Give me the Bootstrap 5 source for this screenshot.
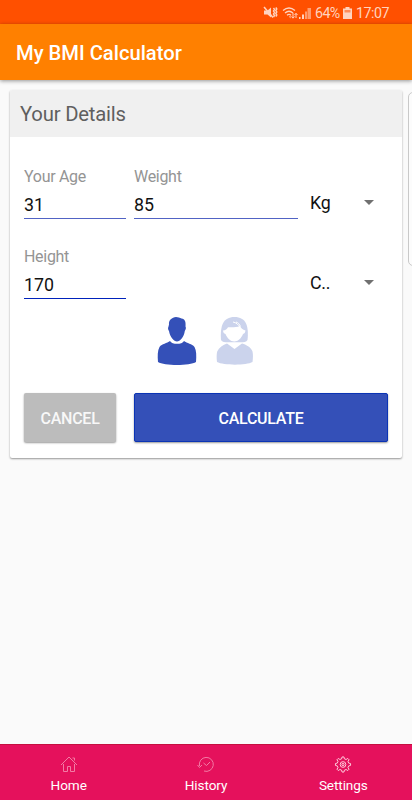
<!DOCTYPE html>
<html lang="en">
<head>
<meta charset="utf-8">
<meta name="viewport" content="width=device-width, initial-scale=1">
<title>My BMI Calculator</title>
<link href="https://cdn.jsdelivr.net/npm/bootstrap@5.3.0/dist/css/bootstrap.min.css" rel="stylesheet">
<style>
body{font-family:Roboto,sans-serif;background:#fafafa;height:800px;overflow:hidden;line-height:1}
svg{display:block;flex:none}
.status{height:24px;background:#ff5000;color:#ffd3bf;font-size:14.3px;padding:2px 24px 0 0}
.pct{margin:0 4px;width:24px;white-space:nowrap;letter-spacing:-.6px}
.batt{margin-right:4px}
.clock{width:32px;white-space:nowrap;letter-spacing:-.5px}
.appbar{height:56px;background:#ff8000;color:#fff;font-size:20.2px;font-weight:500;padding:2px 16px 0;box-shadow:0 1px 4px rgba(0,0,0,.42)}
.page-main{padding:10px 0 0 10px;overflow:hidden}
.details{width:392px;height:368px;flex:none;border:0;border-radius:2px;box-shadow:0 1px 2px rgba(0,0,0,.4)}
.details-head{height:47px;background:#f0f0f0;color:#5f5f5f;font-size:20.3px;letter-spacing:-.2px;padding:2px 10px 0;border-radius:2px 2px 0 0}
.next-card{width:20px;height:174px;margin:2px 0 0 6px;flex:none;border:1px solid #c9c9c9;border-radius:5px;background:#fcfcfc}
.form-area{padding:32px 14px 0}
.entry{height:50px;border-bottom:1px solid #5163c4}
.entry.active{border-color:#0022bb}
.age{width:102px;margin-right:8px}
.weight{width:164px}
.entry-label{font-size:16px;letter-spacing:-.3px;color:#949494;line-height:16px}
.entry-value{font-size:17.8px;color:#111;line-height:20px;margin-top:10px}
.unit{width:64px;margin-left:auto;margin-right:14px;font-size:17.8px;letter-spacing:-.2px;color:#111;padding-top:18px}
.second{margin-top:30px}
.people{height:50px;margin-top:17px;padding-left:133px;gap:19px}
.actions{margin-top:27px;gap:18px}
.act{height:49px;border-radius:2px;border:0;color:#fff;font-size:16px;letter-spacing:-.25px;font-weight:500;padding:3px 0 0;box-shadow:0 1px 2px rgba(0,0,0,.4)}
.act-cancel{width:92px;background:#bcbcbc;color:#f8f8f8}
.act-calc{background:#3450b8;border:1px solid #0b34b5}
.tabs{height:56px;background:#e5115c;border-top:1px solid #c50f40}
.tab{color:#fff;font-size:13.6px;letter-spacing:-.1px;padding-top:11px;gap:6px}
</style>
</head>
<body class="d-flex flex-column">
<div class="status d-flex align-items-center justify-content-end">
  <svg width="15" height="14" viewBox="0 0 15 14" fill="none" stroke="#ffd3bf"><path d="M1 4.500h3.500L8 1.500v10L4.500 8.500H1z" fill="#ffd3bf" stroke="none"/><path d="M1 1l9 10.500" stroke-width="1.500"/><path d="M10.500 2l1 1.500-1 1.500 1 1.500-1 1.500 1 1.500-1 1.500M12.800 1.500l1 1.500-1 1.500 1 1.500-1 1.500 1 1.500-1 1.500" stroke-width="1.400"/></svg>
  <svg class="ms-1" width="17" height="14" viewBox="0 0 17 14" fill="none" stroke="#ffd3bf" stroke-width="1.300"><path d="M1 4.500Q7 -.5 13 4.500M3 7q4-3.500 8 0M5 9.300q2-1.800 4 0"/><path d="M7 10.500l1.500-.5v2.500z" fill="#ffd3bf" stroke="none"/><path d="M11 7v5M9.500 10.500l1.500 1.700 1.500-1.700M14 12V7.500M12.500 9L14 7.300 15.500 9" stroke-width="1"/></svg>
  <svg width="12" height="14" viewBox="0 0 12 14"><path d="M0 11h1.500v2H0zM3 8.500h2V13H3z" fill="#ffd3bf"/><path d="M6 5.500h2V13H6zM8.500 2H12v11H8.500z" fill="#ff9c6e"/></svg>
  <span class="pct">64%</span>
  <svg class="batt" width="9" height="12" viewBox="0 0 9 12"><path d="M2.500 0h4v1.500H9V12H0V1.500h2.500z" fill="#ffd3bf"/><path d="M1.500 3h6v2.500h-6z" fill="#ff8c58"/></svg>
  <span class="clock">17:07</span>
</div>
<header class="appbar d-flex align-items-center">My BMI Calculator</header>
<main class="page-main d-flex flex-grow-1 align-items-start">
  <section class="details card">
    <div class="details-head d-flex align-items-center">Your Details</div>
    <div class="form-area">
      <div class="d-flex">
        <div class="entry age"><div class="entry-label">Your Age</div><div class="entry-value">31</div></div>
        <div class="entry weight"><div class="entry-label">Weight</div><div class="entry-value">85</div></div>
        <div class="unit d-flex align-items-center justify-content-between"><span>Kg</span><svg width="10" height="6" viewBox="0 0 10 6"><path d="M0 0h10L5 5z" fill="#707070"/></svg></div>
      </div>
      <div class="second d-flex">
        <div class="entry active age"><div class="entry-label">Height</div><div class="entry-value">170</div></div>
        <div class="unit d-flex align-items-center justify-content-between"><span>C..</span><svg width="10" height="6" viewBox="0 0 10 6"><path d="M0 0h10L5 5z" fill="#707070"/></svg></div>
      </div>
      <div class="people d-flex">
        <svg width="40" height="50" viewBox="0 0 40 50" fill="#3450b8"><path d="M12 8.500C11.500 4 15 1.500 19 1c2 .3 4 .5 5.500 1.500C28 3 29 6 28.500 10.500c.8 1.300.3 3-.7 4.500C27 21 23 25.500 20 25.500S13 21 12 15c-1-1.500-1.300-3-.5-4.500z"/><path d="M13 25C15 28.800 25 28.800 27 25c3 2.500 8 2.500 10.500 6C39.500 34.500 39.500 40 39 46c-6 4-32 4-38 0C.5 40 .5 34.500 2.500 31 5 27.500 10 27.500 13 25z"/></svg>
        <svg width="38" height="50" viewBox="0 0 38 50" fill="#cbd3ec"><path d="M5 24C4 10 7 1 18.500 1S33 10 31.500 24c-1 2-4 2.300-7 2.300H12C9 26.300 6 26 5 24z"/><path d="M7 14.500c2.500 0 4-1.500 5-3.300 4 .3 8 .3 12-1.200 1 2.500 2.500 3.500 5.500 4.500-.3 2-1 3.200-2.500 3.500-1.500 4-5 7.500-8.700 7.500S11 22 9.500 18C8 17.700 7.200 16.500 7 14.500z" fill="#fff"/><path d="M17 6c3 .5 5.500 2.500 7 5.500M20 6c2 .5 3.500 2 4.500 4.500" fill="none" stroke="#fff"/><path d="M11 27.500l7.500 5.500L26 27.500c5 1.500 9 4 10.500 8 .7 3 .5 7 0 10.500-6 3.500-29 3.500-35.500 0-.5-4-.5-8 .2-10.500C3 31.500 7 29 11 27.500z"/></svg>
      </div>
      <div class="actions d-flex">
        <button class="act act-cancel">CANCEL</button>
        <button class="act act-calc flex-grow-1">CALCULATE</button>
      </div>
    </div>
  </section>
  <div class="next-card"></div>
</main>
<nav class="tabs row g-0">
  <div class="tab col d-flex flex-column align-items-center">
    <svg width="18" height="17" viewBox="0 0 18 17" fill="none" stroke="#f27ba4" stroke-width="1"><path d="M1 9l8-8 8 8M3.500 8v7.500h4V10.500h3v5h4V8M12.500 2h2v2.500"/></svg><span>Home</span></div>
  <div class="tab col d-flex flex-column align-items-center">
    <svg width="18" height="17" viewBox="0 0 18 17" fill="none" stroke="#f27ba4" stroke-width="1"><path d="M2.500 10A7 7 0 1 1 7 15M.5 9l2 2.500L5 9M6.500 7l3 2.500L13 6"/></svg><span>History</span></div>
  <div class="tab col d-flex flex-column align-items-center">
    <svg width="18" height="17" viewBox="0 0 18 18" fill="none" stroke="#ffd5e2" stroke-width="1"><path d="M7.500 3L8 1h2l.5 2 1.800.7L14 2.600 15.400 4l-1.100 1.700.7 1.800 2 .5v2l-2 .5-.7 1.800 1.100 1.700-1.400 1.400-1.700-1.100-1.800.7-.5 2H8l-.5-2-1.800-.7L4 15.400 2.600 14l1.100-1.700L3 10.500 1 10V8l2-.5.7-1.800L2.600 4 4 2.600l1.700 1.100z"/><circle cx="9" cy="9" r="3"/><circle cx="9" cy="9" r="1.200"/></svg><span>Settings</span></div>
</nav>
<script src="https://cdn.jsdelivr.net/npm/bootstrap@5.3.0/dist/js/bootstrap.bundle.min.js"></script>
</body>
</html>
